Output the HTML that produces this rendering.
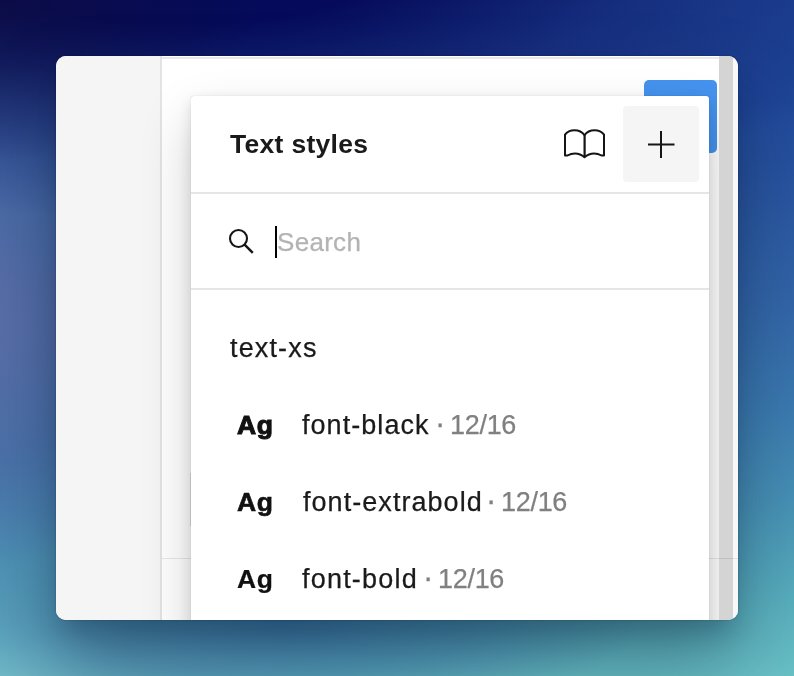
<!DOCTYPE html>
<html lang="en">
<head>
<meta charset="utf-8">
<title>Text styles</title>
<style>
  html, body { margin: 0; padding: 0; }
  html { width: 794px; height: 676px; overflow: hidden; background: #2a57a1; }
  body {
    width: 794px; height: 676px; overflow: hidden; position: relative;
    font-family: "Liberation Sans", sans-serif;
    background:
      radial-gradient(ellipse 260px 160px at 0px 0px, rgba(14,12,62,0.7) 0%, rgba(14,12,62,0) 100%),
      radial-gradient(ellipse 800px 280px at 180px -60px, rgba(5,11,90,1) 0%, rgba(5,11,90,1) 30%, rgba(10,12,90,0.42) 60%, rgba(14,14,90,0) 100%),
      radial-gradient(ellipse 300px 340px at -20px 320px, rgba(96,112,168,0.95) 0%, rgba(78,110,168,0.82) 40%, rgba(74,122,174,0.42) 72%, rgba(80,130,180,0) 100%),
      radial-gradient(ellipse 360px 90px at 280px 626px, rgba(40,84,160,0.5) 0%, rgba(40,84,160,0.28) 55%, rgba(40,84,160,0) 100%),
      radial-gradient(ellipse 380px 170px at 0px 730px, rgba(126,180,204,0.6) 0%, rgba(120,176,200,0) 100%),
      linear-gradient(to bottom, #1f4799 0%, #204899 15%, #2a57a1 30%, #3366a8 45%, #3b7ab0 60%, #4893b6 75%, #59b0be 89%, #69c1c6 100%);
  }
  .abs { position: absolute; }
  #title, .t, .ag { will-change: transform; }
  #win {
    position: absolute; left: 56px; top: 56px; width: 682px; height: 564px;
    border-radius: 10px; overflow: hidden; background: #fff;
  }
  #winshadow {
    position: absolute; left: 56px; top: 56px; width: 682px; height: 564px;
    border-radius: 10px;
    box-shadow: 0 45px 80px rgba(4,16,44,0.36), 0 18px 26px -6px rgba(4,14,36,0.2), 0 0 2px rgba(0,0,0,0.3);
  }
  #sidebar { left: 0; top: 0; width: 104px; height: 564px; background: #f5f5f5; }
  #sidediv { left: 104px; top: 0; width: 2px; height: 564px; background: #e3e3e3; }
  #topline { left: 106px; top: 1px; width: 576px; height: 2px; background: #e9e9e9; }
  .hline { top: 501.6px; height: 1.7px; background: rgba(0,0,0,0.09); }
  #bluebtn { left: 588px; top: 24px; width: 73px; height: 73px; border-radius: 5px; background: #4593ef; }
  #track { left: 663px; top: 0; width: 14px; height: 564px; background: #d4d4d4; }
  #trackr { left: 677px; top: 0; width: 5px; height: 564px; background: #f8f8f8; }
  #edge { left: 134px; top: 417px; width: 1px; height: 53px; background: rgba(0,0,0,0.12); }
  #popup {
    left: 135px; top: 40px; width: 518px; height: 560px; background: #fff;
    border-radius: 3px;
    box-shadow: 0 0 1px rgba(0,0,0,0.25), 0 24px 52px rgba(0,0,0,0.19), 0 5px 14px rgba(0,0,0,0.12);
  }
  .bd { left: 0; width: 518px; height: 2px; background: #e6e6e6; }
  #title { left: 39px; top: 32px; font-size: 26.5px; line-height: 32px; font-weight: 700; color: #1a1a1a; white-space: nowrap; letter-spacing: 0.3px; }
  #plusbtn { left: 432px; top: 10px; width: 76px; height: 76px; border-radius: 4px; background: #f5f5f5; }
  .t { -webkit-text-stroke: 0.25px; font-size: 27px; line-height: 32px; color: #1a1a1a; white-space: nowrap; letter-spacing: 1.15px; }
  .g { color: #808080; }
  .n { letter-spacing: -0.3px; }
  .d { letter-spacing: 0; font-size: 31px; margin-top: -0.9px; margin-left: -0.2px; }
  .ag { filter: blur(0.35px); transform-origin: 0 50%; transform: scaleX(1.06); font-size: 25px; line-height: 32px; font-weight: 700; color: #111; white-space: nowrap; letter-spacing: 0.5px; }
  svg { position: absolute; left: 0; top: 0; overflow: visible; }
</style>
</head>
<body>
<div id="winshadow"></div>
<div id="win">
  <div id="sidebar" class="abs"></div>
  <div id="sidediv" class="abs"></div>
  <div id="topline" class="abs"></div>
  <div class="abs hline" style="left:106px;width:29px"></div>
  <div id="bluebtn" class="abs"></div>
  <div id="edge" class="abs"></div>
  <div id="popup" class="abs">
    <div id="title" class="abs">Text styles</div>
    <div id="plusbtn" class="abs"></div>
    <div class="abs bd" style="top:96px"></div>
    <div class="abs bd" style="top:192px"></div>
    <!-- coordinates in the svg are page coords minus popup origin (191,96) -->
    <svg width="518" height="560" viewBox="191 96 518 560" fill="none" stroke="#151515" stroke-width="2">
      <!-- book -->
      <path d="M565,155.5 V134.6 C567,131.8 570.5,130.2 574.5,130.2 C578.8,130.2 582.2,131.9 584.5,135.2 C586.8,131.9 590.2,130.2 594.5,130.2 C598.5,130.2 602,131.8 604,134.6 V155.5 H601.5 C599,154 596.5,153.4 594,153.4 C590,153.4 587,155 584.5,157.3 C582,155 579,153.4 575,153.4 C572.5,153.4 570,154 567.5,155.5 H565 Z" stroke-linejoin="round"/>
      <path d="M584.6,135 V157" stroke-width="2.2"/>
      <!-- plus -->
      <path d="M648,144.5 H674.5 M661,131 V158"/>
      <!-- search -->
      <circle cx="238.5" cy="238.5" r="8.5" stroke-width="2.1"/>
      <path d="M244.6,244.6 L252.8,252.8" stroke-width="2.4"/>
    </svg>
    <div class="abs" id="caret" style="left:84px;top:130px;width:2px;height:32px;background:#000"></div>
    <div class="abs t" id="search" style="left:86px;top:130px;color:#b3b3b3;font-size:26px;letter-spacing:0.3px">Search</div>
    <div class="abs t" id="grp" style="left:39px;top:236px">text-xs</div>

    <div class="abs ag" id="ag1" style="left:45.6px;top:313px;-webkit-text-stroke:1px #111">Ag</div>
    <div class="abs t" id="r1" style="left:111.4px;top:313px;letter-spacing:1.05px">font-black</div>
    <div class="abs t g d" id="d1" style="left:244px;top:313px">·</div>
    <div class="abs t g n" id="g1" style="left:259px;top:313px">12/16</div>

    <div class="abs ag" id="ag2" style="left:46px;top:390px;-webkit-text-stroke:0.6px #111">Ag</div>
    <div class="abs t" id="r2" style="left:111.5px;top:390px;letter-spacing:1.05px">font-extrabold</div>
    <div class="abs t g d" id="d2" style="left:295px;top:390px">·</div>
    <div class="abs t g n" id="g2" style="left:310px;top:390px">12/16</div>

    <div class="abs ag" id="ag3" style="left:46px;top:467px;-webkit-text-stroke:0.2px #111">Ag</div>
    <div class="abs t" id="r3" style="left:111.3px;top:467px;letter-spacing:1.2px">font-bold</div>
    <div class="abs t g d" id="d3" style="left:232px;top:467px">·</div>
    <div class="abs t g n" id="g3" style="left:247px;top:467px">12/16</div>
  </div>
  <div id="track" class="abs"></div>
  <div id="trackr" class="abs"></div>
  <div class="abs hline" style="left:653px;width:29px"></div>
</div>
</body>
</html>
